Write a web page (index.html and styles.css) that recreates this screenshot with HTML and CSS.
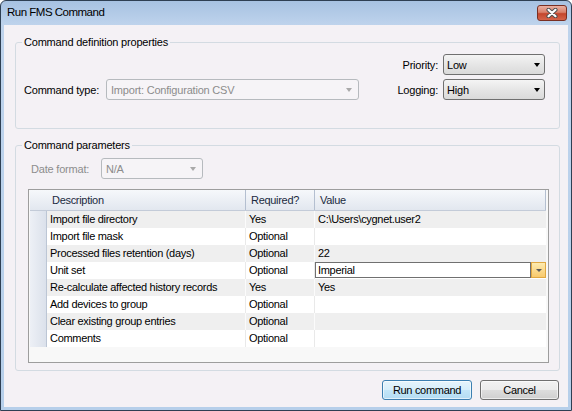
FILE: index.html
```html
<!DOCTYPE html>
<html lang="en">
<head>
 <meta charset="UTF-8">
 <title>Run FMS Command</title>
 <link rel="stylesheet" href="styles.css">
</head>
<body>

 <div class="window">
  <div class="titlebar">
   <span class="title">Run FMS Command</span>
   <div class="close">
    <svg width="12" height="10" viewBox="0 0 12 10">
     <path d="M2.5 1.8 L9.5 8.2 M9.5 1.8 L2.5 8.2" stroke="#505050" stroke-width="4.2" stroke-linecap="round"/>
     <path d="M2.5 1.8 L9.5 8.2 M9.5 1.8 L2.5 8.2" stroke="#fff" stroke-width="2.2" stroke-linecap="round"/>
    </svg>
   </div>
  </div>

  <div class="content">
   <fieldset class="group">
    <legend>Command definition properties</legend>
    <div class="def-body">
     <div class="field">
      <label class="type-label">Command type:</label>
      <div class="combo disabled type-combo"><span>Import: Configuration CSV</span><i class="arrow"></i></div>
     </div>
     <div class="opts">
      <label>Priority:</label>
      <div class="combo list"><span>Low</span><i class="arrow"></i></div>
      <label>Logging:</label>
      <div class="combo list"><span>High</span><i class="arrow"></i></div>
     </div>
    </div>
   </fieldset>

   <fieldset class="group">
    <legend>Command parameters</legend>
    <div class="params-body">
     <div class="field">
      <label class="date-label">Date format:</label>
      <div class="combo disabled date-combo"><span>N/A</span><i class="arrow"></i></div>
     </div>

     <div class="grid">
      <div class="grid-head">
       <div class="first">Description</div>
       <div>Required?</div>
       <div>Value</div>
      </div>
      <div class="row alt"><div class="rh"></div><div>Import file directory</div><div>Yes</div><div>C:\Users\cygnet.user2</div></div>
      <div class="row"><div class="rh"></div><div>Import file mask</div><div>Optional</div><div></div></div>
      <div class="row alt"><div class="rh"></div><div>Processed files retention (days)</div><div>Optional</div><div>22</div></div>
      <div class="row"><div class="rh"></div><div>Unit set</div><div>Optional</div>
       <div class="edit"><span class="edit-box">Imperial</span><span class="edit-btn"><i class="arrow small"></i></span></div>
      </div>
      <div class="row alt"><div class="rh"></div><div>Re-calculate affected history records</div><div>Yes</div><div>Yes</div></div>
      <div class="row"><div class="rh"></div><div>Add devices to group</div><div>Optional</div><div></div></div>
      <div class="row alt"><div class="rh"></div><div>Clear existing group entries</div><div>Optional</div><div></div></div>
      <div class="row"><div class="rh"></div><div>Comments</div><div>Optional</div><div></div></div>
     </div>
    </div>
   </fieldset>

   <div class="buttons">
    <button class="btn btn-run">Run command</button>
    <button class="btn btn-cancel">Cancel</button>
   </div>
  </div>
 </div>

</body>
</html>
```

FILE: styles.css
```css
 * {
   box-sizing: border-box;
  }

 html, body {
   margin: 0;
  }

 body {
   font-family: "Liberation Sans", Arial, sans-serif;
   font-size: 11px;
   letter-spacing: -0.2px;
   color: #000;
   background: #fff;
  }

 .window {
   width: 572px;
   height: 411px;
   display: flex;
   flex-direction: column;
   border: 1px solid #2e3f53;
   border-radius: 6px 6px 0 0;
   background: linear-gradient(#a7c2e2, #bed3ec 24px, #b6cfea);
   overflow: hidden;
  }

 .titlebar {
   height: 24px;
   display: flex;
   flex-shrink: 0;
  }

 .title {
   padding: 5px 0 0 6px;
   font-size: 11.5px;
   letter-spacing: -0.5px;
   color: #000;
  }

 .close {
   width: 30px;
   height: 16px;
   margin: 4px 4px 0 auto;
   display: flex;
   align-items: center;
   justify-content: center;
   border: 1px solid #7a2f22;
   border-radius: 3px;
   background: linear-gradient(#eab0a2, #d9806a 45%, #c4462c 55%, #d4644a);
  }

 .content {
   flex: 1;
   margin: 0 3px 3px;
   padding: 10px 8px 0 11px;
   background: #f4f1f5;
  }

 fieldset.group {
   margin: 0;
   padding: 0;
   min-width: 0;
   border: 1px solid #d3dbe2;
   border-radius: 3px;
  }

 .group + .group {
   margin-top: 9px;
  }

 .group legend {
   margin-left: 6px;
   padding: 0 2px;
   line-height: 14px;
  }

 .def-body {
   display: flex;
   justify-content: space-between;
   align-items: flex-end;
   padding: 5px 14px 28px 8px;
  }

 .field {
   display: flex;
   align-items: center;
  }

 .type-label {
   width: 82px;
  }

 .opts {
   display: grid;
   grid-template-columns: auto 102px;
   column-gap: 5px;
   row-gap: 4px;
   align-items: center;
  }

 .opts label {
   text-align: right;
  }

 .combo {
   height: 21px;
   display: flex;
   align-items: center;
   justify-content: space-between;
   padding: 0 4px 0 3px;
   border-radius: 3px;
  }

 .arrow {
   width: 0;
   height: 0;
   border-left: 3.5px solid transparent;
   border-right: 3.5px solid transparent;
   border-top: 4px solid #000;
  }

 .combo.list {
   border: 1px solid #707070;
   background: linear-gradient(#f4f4f4, #e6e6e6 50%, #dadada);
  }

 .combo.disabled {
   padding: 0 6px 0 4px;
   border: 1px solid #b6babe;
   background: #f6f4f7;
   color: #8c8c8c;
  }

 .combo.disabled .arrow {
   border-top-color: #a9a9a9;
  }

 .type-combo {
   width: 253px;
  }

 .params-body {
   padding: 6px 10px 7px 12px;
  }

 .date-label {
   width: 70px;
   margin-left: 3px;
   color: #8d8d8d;
  }

 .date-combo {
   width: 102px;
  }

 .grid {
   height: 174px;
   margin-top: 10px;
   padding: 0 2px 0 1px;
   border: 1px solid #9d9d9d;
   background: #f8f8f8;
   letter-spacing: -0.3px;
  }

 .grid-head {
   display: grid;
   grid-template-columns: 216px 69px 231px;
   height: 21px;
   border-bottom: 1px solid #c3cbd8;
   background: linear-gradient(#f6f8fb, #e2e7ef);
   color: #1b2a3e;
  }

 .grid-head div {
   line-height: 20px;
   padding-left: 5px;
   border-right: 1px solid #b4bfd0;
  }

 .grid-head .first {
   padding-left: 22px;
  }

 .row {
   display: grid;
   grid-template-columns: 17px 199px 69px 231px;
   height: 17px;
   background: #fff;
  }

 .row.alt {
   background: #efefef;
  }

 .row div {
   line-height: 17px;
   padding-left: 3px;
   white-space: nowrap;
   overflow: hidden;
   border-right: 1px solid #e9e9e9;
  }

 .row.alt div {
   border-right-color: #fbfbfb;
  }

 .row div:last-child {
   border-right: none;
  }

 .row .rh,
 .row.alt .rh {
   padding: 0;
   background: linear-gradient(to right, #edf0f6, #dbe1eb);
   border-right: 1px solid #bcc6d5;
  }

 .row .edit {
   display: flex;
   padding: 0;
  }

 .edit-box {
   flex: 1;
   height: 16px;
   line-height: 14px;
   padding-left: 2px;
   border: 1px solid #707070;
   background: #fff;
  }

 .edit-btn {
   width: 15px;
   height: 16px;
   display: flex;
   align-items: center;
   justify-content: center;
   border: 1px solid #e0a842;
   background: linear-gradient(#fdebb0, #f8c96c);
  }

 .arrow.small {
   border-left-width: 3px;
   border-right-width: 3px;
   border-top: 3px solid #5a5a5a;
  }

 .buttons {
   display: flex;
   justify-content: flex-end;
   gap: 8px;
   margin: 9px 1px 0 0;
  }

 .btn {
   height: 20px;
   padding: 0;
   font: inherit;
   letter-spacing: -0.3px;
   color: #000;
   border-radius: 3px;
   box-shadow: inset 0 0 0 1px rgba(255,255,255,0.6);
  }

 .btn-run {
   width: 90px;
   border: 1px solid #3c7fb1;
   background: linear-gradient(#e6f4fc, #d6eefb 50%, #c3e6f8 51%, #b3dcf3);
  }

 .btn-cancel {
   width: 79px;
   border: 1px solid #707070;
   background: linear-gradient(#f2f2f2, #ebebeb 50%, #dddddd 51%, #cfcfcf);
  }
```
